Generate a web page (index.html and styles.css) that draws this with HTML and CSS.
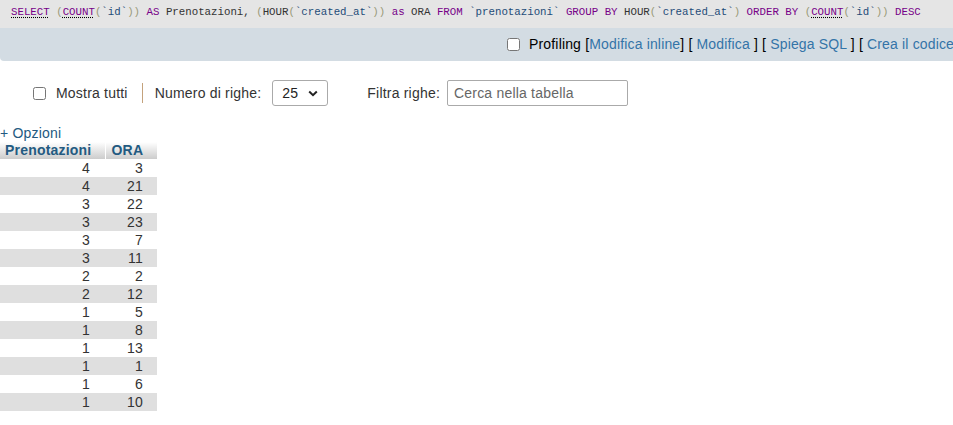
FILE: index.html
```html
<!DOCTYPE html>
<html lang="it">
<head>
<meta charset="utf-8">
<title>SQL result</title>
<link rel="stylesheet" href="styles.css">
</head>
<body>
<div class="sql"><span class="kw doc">SELECT</span> <span class="br">(</span><span class="kw doc">COUNT</span><span class="br">(</span><span class="id">`id`</span><span class="br">))</span> <span class="kw">AS</span> <span class="nm">Prenotazioni</span><span class="pn">,</span> <span class="br">(</span><span class="nm">HOUR</span><span class="br">(</span><span class="id">`created_at`</span><span class="br">))</span> <span class="kw">as</span> <span class="nm">ORA</span> <span class="kw">FROM</span> <span class="id">`prenotazioni`</span> <span class="kw">GROUP</span> <span class="kw">BY</span> <span class="nm">HOUR</span><span class="br">(</span><span class="id">`created_at`</span><span class="br">)</span> <span class="kw">ORDER</span> <span class="kw">BY</span> <span class="br">(</span><span class="kw doc">COUNT</span><span class="br">(</span><span class="id">`id`</span><span class="br">))</span> <span class="kw">DESC</span></div>
<div class="toolbar">
  <label class="chk"><input type="checkbox"> Profiling</label> [<a href="#">Modifica inline</a>] [ <a href="#">Modifica</a> ] [ <a href="#">Spiega SQL</a> ] [ <a href="#">Crea il codice</a>
</div>
<div class="controls">
  <label class="chk"><input type="checkbox"><span>Mostra tutti</span></label>
  <span class="sep"></span>
  <span class="lbl">Numero di righe:</span>
  <div class="select"><span>25</span><svg width="10" height="7" viewBox="0 0 10 7"><path d="M1.2 1.5 L5 5.2 L8.8 1.5" fill="none" stroke="#222" stroke-width="2"/></svg></div>
  <span class="lbl filt">Filtra righe:</span>
  <div class="input">Cerca nella tabella</div>
</div>
<a class="options" href="#">+ Opzioni</a>
<table class="res">
  <colgroup><col class="c1"><col class="c2"></colgroup>
  <thead><tr><th>Prenotazioni</th><th class="ora">ORA</th></tr></thead>
  <tbody>
    <tr><td>4</td><td class="r2">3</td></tr>
    <tr><td>4</td><td class="r2">21</td></tr>
    <tr><td>3</td><td class="r2">22</td></tr>
    <tr><td>3</td><td class="r2">23</td></tr>
    <tr><td>3</td><td class="r2">7</td></tr>
    <tr><td>3</td><td class="r2">11</td></tr>
    <tr><td>2</td><td class="r2">2</td></tr>
    <tr><td>2</td><td class="r2">12</td></tr>
    <tr><td>1</td><td class="r2">5</td></tr>
    <tr><td>1</td><td class="r2">8</td></tr>
    <tr><td>1</td><td class="r2">13</td></tr>
    <tr><td>1</td><td class="r2">1</td></tr>
    <tr><td>1</td><td class="r2">6</td></tr>
    <tr><td>1</td><td class="r2">10</td></tr>
  </tbody>
</table>
</body>
</html>
```

FILE: styles.css
```css
html, body {
  margin: 0;
  padding: 0;
  background: #fff;
  font-family: "Liberation Sans", Arial, sans-serif;
  font-size: 14px;
  letter-spacing: 0.2px;
  color: #000;
  overflow: hidden;
}
.sql {
  height: 28px;
  line-height: 24px;
  background: #e5e5e5;
  padding-left: 11px;
  font-family: "Liberation Mono", monospace;
  font-size: 10.75px;
  letter-spacing: 0;
  white-space: nowrap;
  color: #333;
}
.sql .kw { color: #770088; }
.sql .doc {
  text-decoration: underline dotted #000;
  text-underline-offset: 2px;
}
.sql .br { color: #999977; }
.sql .pn { color: #333; }
.sql .nm { color: #333; }
.sql .id { color: #1e4c78; }
.toolbar {
  height: 33px;
  line-height: 33px;
  background: #d3dce3;
  border-bottom-left-radius: 4px;
  padding-left: 507px;
  letter-spacing: 0.16px;
  white-space: nowrap;
  overflow: hidden;
}
.toolbar a { color: #3474a8; text-decoration: none; }
.toolbar .chk input {
  width: 13px;
  height: 13px;
  margin: 0 5px 0 0;
  vertical-align: -2px;
}
.controls {
  margin-top: 19px;
  height: 26px;
  display: flex;
  align-items: center;
  padding-left: 33px;
  color: #333;
}
.controls .chk {
  display: flex;
  align-items: center;
  gap: 10px;
}
.controls .chk input {
  width: 13px;
  height: 13px;
  margin: 0;
}
.sep {
  width: 1px;
  height: 20px;
  background: #c4a27c;
  margin: 0 12px 0 14px;
}
.lbl { white-space: nowrap; }
.select {
  margin-left: 11px;
  width: 56px;
  height: 26px;
  box-sizing: border-box;
  border: 1px solid #aaa;
  border-radius: 3px;
  display: flex;
  align-items: center;
  justify-content: space-between;
  padding: 0 9px 0 9px;
  color: #222;
  background: #fff;
}
.filt { margin-left: 39px; }
.input {
  margin-left: 7px;
  width: 181px;
  height: 26px;
  box-sizing: border-box;
  border: 1px solid #aaa;
  border-radius: 2px;
  padding-left: 6px;
  line-height: 24px;
  color: #666;
  background: #fff;
}
.options {
  display: block;
  margin-top: 19px;
  line-height: 17px;
  height: 17px;
  color: #235a81;
  text-decoration: none;
}
.res {
  border-collapse: collapse;
  table-layout: fixed;
  width: 157px;
}
.res .c1 { width: 105px; }
.res .c2 { width: 52px; }
.res th {
  height: 17px;
  padding: 0 0 0 5px;
  text-align: left;
  font-weight: bold;
  color: #235a81;
  background: linear-gradient(#ffffff, #cccccc);
  line-height: 17px;
}
.res th.ora {
  border-left: 1px solid #fff;
  padding-left: 6px;
}
.res td {
  height: 18px;
  padding: 0 15px 0 0;
  text-align: right;
  line-height: 18px;
  color: #333;
}
.res td.r2 { padding-right: 14px; }
.res tbody tr:nth-child(even) td { background: #dfdfdf; }
```
